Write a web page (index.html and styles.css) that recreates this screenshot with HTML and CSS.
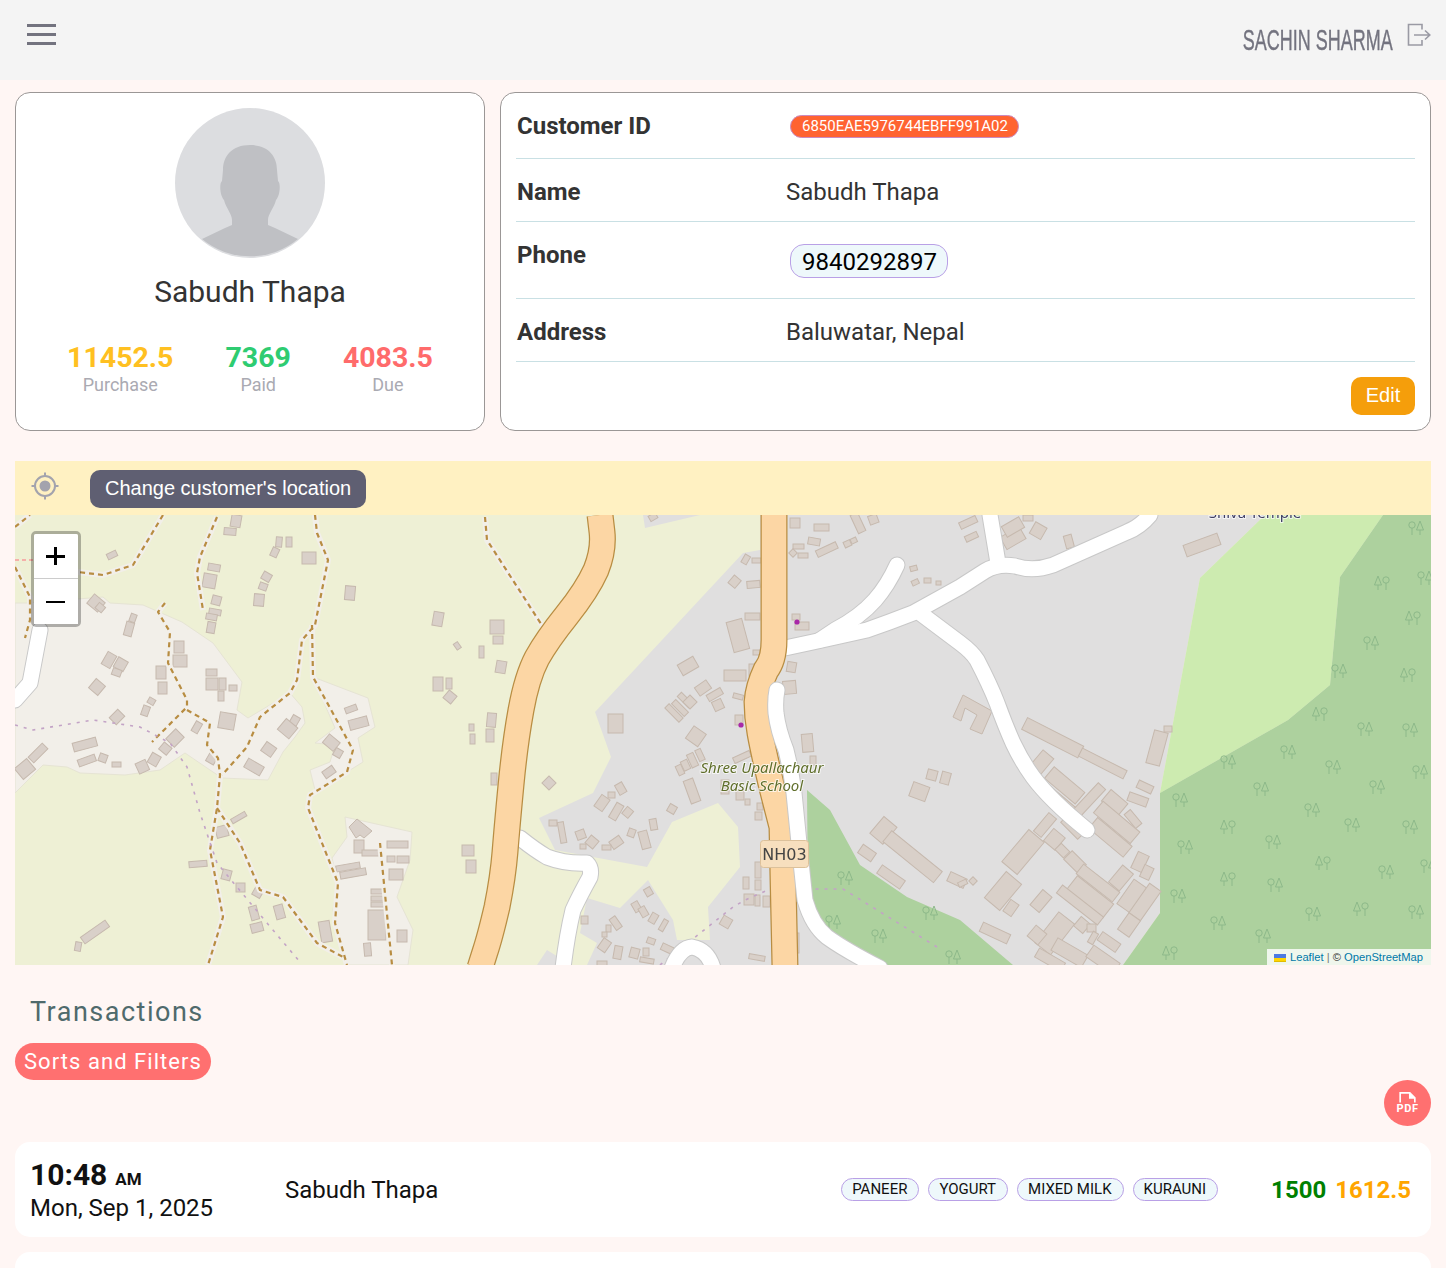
FILE: index.html
```html
<!DOCTYPE html>
<html lang="en">
<head>
    <meta charset="UTF-8">
    <meta name="viewport" content="width=device-width, initial-scale=1.0">
    <title>Customer - Sabudh Thapa</title>
    <link rel="stylesheet" href="styles.css">
</head>
<body>
    <header class="topbar">
        <button class="menu-btn" aria-label="Menu"><span></span><span></span><span></span></button>
        <div class="user">
            <span class="user-name">SACHIN SHARMA</span>
            <svg class="logout" viewBox="0 0 24 24" width="24" height="24" fill="none" stroke="#9a9aa4" stroke-width="1.6">
                <path d="M15 6.5V1.5H1.5V22H15V17"/>
                <path d="M7 12H22.5M18 7.5L22.8 12L18 16.5"/>
            </svg>
        </div>
    </header>

    <main class="page">
        <section class="top-cards">
            <div class="card profile">
                <svg class="avatar" viewBox="175 108 150 150" width="150" height="150">
                    <circle cx="250" cy="183" r="75" fill="#dcdde0"/>
                    <path fill="#bfc0c4" d="M250 145C268 145 277 156 277 170L278 181C281 183 280 196 276 200C274 208 268 214 268 220V225L275 228L298 239A75 75 0 0 1 202 239L225 228L232 225V220C232 214 226 208 224 200C220 196 219 183 222 181L223 170C223 156 232 145 250 145Z"/>
                </svg>
                <h2 class="profile-name">Sabudh Thapa</h2>
                <div class="stats">
                    <div class="stat"><b class="purchase">11452.5</b><span>Purchase</span></div>
                    <div class="stat"><b class="paid">7369</b><span>Paid</span></div>
                    <div class="stat"><b class="due">4083.5</b><span>Due</span></div>
                </div>
            </div>

            <div class="card details">
                <div class="row row-id">
                    <div class="label">Customer ID</div>
                    <div><span class="id-badge">6850EAE5976744EBFF991A02</span></div>
                </div>
                <div class="row row-name">
                    <div class="label">Name</div>
                    <div class="value">Sabudh Thapa</div>
                </div>
                <div class="row row-phone">
                    <div class="label">Phone</div>
                    <div><span class="phone-chip">9840292897</span></div>
                </div>
                <div class="row row-name">
                    <div class="label">Address</div>
                    <div class="value">Baluwatar, Nepal</div>
                </div>
                <div class="edit-wrap"><button class="edit-btn">Edit</button></div>
            </div>
        </section>

        <section class="location-bar">
            <svg class="target" viewBox="0 0 28 28" width="28" height="28" fill="none" stroke="#a3a3ad" stroke-width="2">
                <circle cx="14" cy="14" r="10"/>
                <circle cx="14" cy="14" r="5.5" fill="#a3a3ad" stroke="none"/>
                <path d="M14 0.5V4M14 24V27.5M0.5 14H4M24 14H27.5"/>
            </svg>
            <button class="location-btn">Change customer's location</button>
        </section>

        <section class="map">
            <svg class="map-svg" viewBox="15 515 1416 450" width="1416" height="450">
                <defs>
                    <g id="treeA">
                        <circle cx="-4" cy="-3" r="3.2"/><path d="M-4 0V7M4 -7L7.5 2H0.5ZM4 2V7"/>
                    </g>
                    <g id="treeB">
                        <path d="M-4 -7L-0.5 2H-7.5ZM-4 2V7M4 0V7"/><circle cx="4" cy="-3" r="3.2"/>
                    </g>
                </defs>

                <!-- land -->
                <rect class="farm" x="15" y="515" width="1416" height="450"/>
                <path class="village" d="M15 603L27 603L103 597L110 603L143 605L182 622L213 643L242 682L237 710L248 718L290 693L302 707L305 723L295 737L283 752L268 780L222 778L210 770L185 753L160 770L125 775L80 773L67 767L43 765L15 793Z"/>
                <path class="village" d="M345 817L412 832L410 860L397 897L413 930L408 965L347 965L333 910L338 883L332 858L347 837Z"/>
                <path class="village" d="M313 677L368 698L375 727L358 738L363 762L347 772L315 790L310 770L330 762L335 745L315 743L335 728Z"/>
                <path class="resid" d="M643 515L645 528L700 515ZM743 553L760 550L760 515L1265 515L1200 578L1160 793L1160 913L1123 965L587 965L597 943L580 933L587 898L620 908L648 880L673 920L677 940L710 940L708 907L740 867L738 827L718 803L672 822L647 867L555 850L539 818L593 793L611 757L595 712Z"/>
                <path class="resid" d="M537 965L547 950L560 958L556 965Z"/>
                <path class="meadow" d="M1265 515L1383 515L1340 577L1330 685L1288 720L1160 793L1200 578Z"/>
                <path class="forest" d="M1383 515L1431 515L1431 965L1123 965L1160 913L1160 793L1288 720L1330 685L1340 577Z"/>
                <path class="forest" d="M807 790L830 810L860 865L907 897L960 920L1013 965L880 965L827 937L808 900Z"/>

                <!-- trees -->
                <g class="trees">
                    <use href="#treeA" x="1416" y="528"/><use href="#treeB" x="1382" y="583"/><use href="#treeA" x="1425" y="578"/>
                    <use href="#treeB" x="1413" y="618"/><use href="#treeA" x="1371" y="643"/><use href="#treeB" x="1408" y="675"/>
                    <use href="#treeA" x="1339" y="671"/><use href="#treeB" x="1320" y="714"/><use href="#treeA" x="1365" y="729"/>
                    <use href="#treeA" x="1410" y="730"/><use href="#treeA" x="1288" y="752"/><use href="#treeA" x="1333" y="767"/>
                    <use href="#treeA" x="1228" y="762"/><use href="#treeA" x="1420" y="772"/><use href="#treeA" x="1377" y="787"/>
                    <use href="#treeA" x="1261" y="789"/><use href="#treeA" x="1180" y="800"/><use href="#treeA" x="1312" y="810"/>
                    <use href="#treeB" x="1228" y="827"/><use href="#treeA" x="1352" y="825"/><use href="#treeA" x="1410" y="827"/>
                    <use href="#treeA" x="1273" y="842"/><use href="#treeA" x="1185" y="847"/><use href="#treeB" x="1323" y="863"/>
                    <use href="#treeA" x="1386" y="872"/><use href="#treeB" x="1228" y="879"/><use href="#treeA" x="1428" y="866"/>
                    <use href="#treeA" x="1275" y="885"/><use href="#treeA" x="1178" y="896"/><use href="#treeA" x="1313" y="914"/>
                    <use href="#treeB" x="1361" y="909"/><use href="#treeA" x="1416" y="912"/><use href="#treeA" x="1218" y="923"/>
                    <use href="#treeA" x="1263" y="936"/><use href="#treeB" x="1170" y="953"/>
                    <use href="#treeA" x="845" y="878"/><use href="#treeA" x="833" y="922"/><use href="#treeA" x="879" y="936"/>
                    <use href="#treeA" x="930" y="913"/><use href="#treeA" x="953" y="957"/>
                </g>

                <!-- buildings -->
                <g class="bld">
                    <rect x="107" y="552" width="10" height="6" transform="rotate(-25 112 555)"/>
                    <rect x="231" y="515" width="10" height="12" transform="rotate(10 236 521)"/>
                    <rect x="224" y="528" width="12" height="7" transform="rotate(5 230 532)"/>
                    <rect x="276" y="537" width="6" height="10" transform="rotate(5 279 542)"/>
                    <rect x="286" y="537" width="6" height="10"/>
                    <rect x="271" y="548" width="7" height="9" transform="rotate(25 275 553)"/>
                    <rect x="302" y="552" width="14" height="12"/>
                    <rect x="208" y="564" width="12" height="7" transform="rotate(10 214 568)"/>
                    <rect x="203" y="574" width="13" height="14" transform="rotate(10 210 581)"/>
                    <rect x="262" y="573" width="9" height="8" transform="rotate(30 267 577)"/>
                    <rect x="259" y="583" width="8" height="7" transform="rotate(20 263 587)"/>
                    <rect x="254" y="594" width="10" height="12" transform="rotate(5 259 600)"/>
                    <rect x="212" y="596" width="9" height="9" transform="rotate(15 217 600)"/>
                    <rect x="209" y="609" width="12" height="6" transform="rotate(10 215 612)"/>
                    <rect x="206" y="614" width="11" height="6" transform="rotate(10 212 617)"/>
                    <rect x="207" y="622" width="8" height="11" transform="rotate(10 211 628)"/>
                    <rect x="345" y="586" width="10" height="14" transform="rotate(5 350 593)"/>
                    <rect x="433" y="612" width="10" height="14" transform="rotate(10 438 619)"/>
                    <rect x="455" y="642" width="5" height="7" transform="rotate(-35 458 646)"/>
                    <rect x="89" y="597" width="14" height="12" transform="rotate(40 96 603)"/>
                    <rect x="96" y="604" width="8" height="7" transform="rotate(40 100 608)"/>
                    <rect x="130" y="614" width="6" height="8" transform="rotate(20 133 618)"/>
                    <rect x="125" y="622" width="8" height="14" transform="rotate(15 129 629)"/>
                    <rect x="174" y="641" width="10" height="12"/>
                    <rect x="173" y="655" width="14" height="12"/>
                    <rect x="104" y="653" width="10" height="14" transform="rotate(30 109 660)"/>
                    <rect x="115" y="659" width="11" height="11" transform="rotate(30 121 665)"/>
                    <rect x="112" y="669" width="9" height="7" transform="rotate(20 117 673)"/>
                    <rect x="91" y="681" width="12" height="12" transform="rotate(40 97 687)"/>
                    <rect x="156" y="666" width="10" height="13"/>
                    <rect x="158" y="682" width="9" height="12"/>
                    <rect x="206" y="669" width="11" height="7"/>
                    <rect x="206" y="678" width="12" height="12"/>
                    <rect x="219" y="678" width="7" height="12"/>
                    <rect x="229" y="685" width="8" height="6"/>
                    <rect x="218" y="691" width="6" height="10"/>
                    <rect x="148" y="698" width="7" height="6" transform="rotate(30 151 701)"/>
                    <rect x="142" y="706" width="7" height="10" transform="rotate(20 146 711)"/>
                    <rect x="111" y="712" width="12" height="10" transform="rotate(-45 117 717)"/>
                    <rect x="219" y="713" width="16" height="16" transform="rotate(10 227 721)"/>
                    <rect x="193" y="722" width="7" height="11" transform="rotate(30 197 728)"/>
                    <rect x="291" y="716" width="8" height="9" transform="rotate(30 295 720)"/>
                    <rect x="280" y="722" width="15" height="14" transform="rotate(40 288 729)"/>
                    <rect x="73" y="740" width="24" height="9" transform="rotate(-15 85 745)"/>
                    <rect x="78" y="757" width="18" height="7" transform="rotate(-20 87 761)"/>
                    <rect x="99" y="754" width="8" height="8" transform="rotate(20 103 758)"/>
                    <rect x="112" y="762" width="9" height="5"/>
                    <rect x="28" y="749" width="20" height="8" transform="rotate(-45 38 753)"/>
                    <rect x="17" y="762" width="16" height="14" transform="rotate(-40 25 769)"/>
                    <rect x="168" y="732" width="14" height="12" transform="rotate(-45 175 738)"/>
                    <rect x="160" y="744" width="10" height="9" transform="rotate(40 165 749)"/>
                    <rect x="149" y="754" width="10" height="11" transform="rotate(30 154 760)"/>
                    <rect x="137" y="761" width="11" height="11" transform="rotate(-25 143 767)"/>
                    <rect x="207" y="754" width="9" height="9" transform="rotate(30 211 759)"/>
                    <rect x="263" y="744" width="12" height="11" transform="rotate(35 269 749)"/>
                    <rect x="245" y="762" width="18" height="10" transform="rotate(30 254 767)"/>
                    <rect x="345" y="706" width="12" height="6" transform="rotate(-20 351 709)"/>
                    <rect x="349" y="718" width="19" height="10" transform="rotate(-15 359 723)"/>
                    <rect x="324" y="737" width="14" height="11" transform="rotate(40 331 743)"/>
                    <rect x="334" y="749" width="8" height="8" transform="rotate(30 338 753)"/>
                    <rect x="323" y="768" width="12" height="8" transform="rotate(-35 329 772)"/>
                    <rect x="433" y="677" width="10" height="14"/>
                    <rect x="446" y="678" width="6" height="11"/>
                    <rect x="445" y="692" width="10" height="10" transform="rotate(40 450 697)"/>
                    <rect x="469" y="724" width="5" height="7"/>
                    <rect x="470" y="734" width="5" height="10"/>
                    <rect x="462" y="845" width="12" height="11"/>
                    <rect x="466" y="860" width="10" height="13"/>
                    <rect x="231" y="815" width="16" height="5" transform="rotate(-30 239 818)"/>
                    <rect x="216" y="826" width="12" height="11" transform="rotate(-15 222 832)"/>
                    <rect x="189" y="861" width="18" height="6" transform="rotate(-5 198 864)"/>
                    <rect x="222" y="870" width="9" height="10" transform="rotate(15 227 875)"/>
                    <rect x="236" y="883" width="9" height="9"/>
                    <rect x="253" y="888" width="9" height="9" transform="rotate(30 258 893)"/>
                    <rect x="250" y="906" width="8" height="14" transform="rotate(-15 254 913)"/>
                    <rect x="275" y="905" width="9" height="14" transform="rotate(-15 279 912)"/>
                    <rect x="251" y="923" width="12" height="9" transform="rotate(-15 257 928)"/>
                    <rect x="320" y="921" width="11" height="21" transform="rotate(-10 326 932)"/>
                    <rect x="80" y="928" width="30" height="8" transform="rotate(-35 95 932)"/>
                    <rect x="75" y="942" width="6" height="9" transform="rotate(10 78 947)"/>
                    <path d="M349 827L357 819L372 831L364 838L360 835L356 838Z"/>
                    <rect x="354" y="840" width="10" height="13"/>
                    <rect x="362" y="850" width="18" height="6"/>
                    <rect x="387" y="841" width="21" height="7"/>
                    <rect x="397" y="856" width="12" height="7"/>
                    <rect x="387" y="856" width="8" height="6"/>
                    <rect x="336" y="864" width="24" height="6" transform="rotate(-10 348 867)"/>
                    <rect x="340" y="870" width="26" height="7" transform="rotate(-10 353 873)"/>
                    <rect x="389" y="869" width="14" height="11"/>
                    <rect x="371" y="889" width="13" height="5"/>
                    <rect x="371" y="896" width="13" height="5"/>
                    <rect x="371" y="902" width="13" height="5"/>
                    <rect x="368" y="910" width="18" height="30"/>
                    <rect x="397" y="930" width="10" height="12"/>
                    <rect x="364" y="943" width="7" height="13" transform="rotate(-5 368 949)"/>

                    <rect x="490" y="620" width="14" height="14"/>
                    <rect x="493" y="636" width="10" height="8"/>
                    <rect x="479" y="646" width="5" height="12"/>
                    <rect x="496" y="661" width="10" height="12" transform="rotate(10 501 667)"/>
                    <rect x="487" y="713" width="9" height="14" transform="rotate(5 491 720)"/>
                    <rect x="486" y="729" width="8" height="13"/>
                    <rect x="491" y="773" width="6" height="12"/>
                    <rect x="544" y="778" width="10" height="10" transform="rotate(45 549 783)"/>
                    <rect x="649" y="514" width="8" height="6" transform="rotate(-30 653 517)"/>
                    <rect x="608" y="714" width="15" height="19"/>
                    <rect x="679" y="660" width="18" height="12" transform="rotate(-30 688 666)"/>
                    <rect x="696" y="683" width="14" height="10" transform="rotate(-35 703 688)"/>
                    <rect x="707" y="691" width="16" height="7" transform="rotate(-30 715 695)"/>
                    <rect x="713" y="700" width="10" height="10" transform="rotate(-25 718 705)"/>
                    <rect x="724" y="670" width="22" height="11"/>
                    <rect x="664" y="710" width="20" height="6" transform="rotate(45 674 713)"/>
                    <rect x="671" y="705" width="18" height="6" transform="rotate(45 680 708)"/>
                    <rect x="677" y="697" width="16" height="6" transform="rotate(45 685 700)"/>
                    <rect x="685" y="697" width="10" height="10" transform="rotate(45 690 702)"/>
                    <rect x="730" y="620" width="16" height="31" transform="rotate(-15 738 636)"/>
                    <rect x="745" y="613" width="15" height="7"/>
                    <rect x="730" y="577" width="9" height="10" transform="rotate(40 735 582)"/>
                    <rect x="747" y="581" width="13" height="7" transform="rotate(-5 753 585)"/>
                    <rect x="743" y="555" width="6" height="9" transform="rotate(30 746 559)"/>
                    <rect x="752" y="558" width="9" height="5"/>
                    <rect x="753" y="650" width="7" height="5"/>
                    <rect x="749" y="664" width="8" height="12"/>
                    <rect x="733" y="694" width="10" height="5" transform="rotate(15 738 697)"/>
                    <rect x="735" y="715" width="8" height="10"/>
                    <rect x="688" y="729" width="15" height="15" transform="rotate(35 696 737)"/>
                    <rect x="733" y="754" width="18" height="6" transform="rotate(-25 742 757)"/>
                    <rect x="697" y="749" width="6" height="12" transform="rotate(-25 700 755)"/>
                    <rect x="689" y="753" width="7" height="14" transform="rotate(-25 693 760)"/>
                    <rect x="682" y="760" width="7" height="10" transform="rotate(-25 686 765)"/>
                    <rect x="677" y="765" width="6" height="10" transform="rotate(-25 680 770)"/>
                    <rect x="687" y="779" width="10" height="24" transform="rotate(-20 692 791)"/>
                    <rect x="721" y="780" width="8" height="14"/>
                    <rect x="736" y="790" width="8" height="10"/>
                    <rect x="745" y="799" width="5" height="6"/>
                    <rect x="757" y="803" width="6" height="7"/>
                    <rect x="755" y="812" width="7" height="8"/>
                    <rect x="668" y="805" width="8" height="8" transform="rotate(30 672 809)"/>
                    <rect x="617" y="783" width="8" height="11" transform="rotate(-30 621 789)"/>
                    <rect x="608" y="792" width="7" height="6"/>
                    <rect x="597" y="796" width="10" height="14" transform="rotate(35 602 803)"/>
                    <rect x="612" y="803" width="8" height="17" transform="rotate(30 616 812)"/>
                    <rect x="623" y="808" width="9" height="8" transform="rotate(-50 628 812)"/>
                    <rect x="650" y="819" width="7" height="11" transform="rotate(-10 653 825)"/>
                    <rect x="628" y="829" width="7" height="8" transform="rotate(20 632 833)"/>
                    <rect x="640" y="831" width="9" height="18" transform="rotate(-15 644 840)"/>
                    <rect x="610" y="838" width="12" height="9" transform="rotate(-35 616 842)"/>
                    <rect x="602" y="845" width="9" height="5"/>
                    <rect x="587" y="837" width="10" height="10" transform="rotate(40 592 842)"/>
                    <rect x="576" y="830" width="9" height="9" transform="rotate(-20 581 834)"/>
                    <rect x="580" y="844" width="6" height="5"/>
                    <rect x="549" y="820" width="8" height="6"/>
                    <rect x="559" y="822" width="6" height="21" transform="rotate(-10 562 832)"/>
                    <rect x="743" y="877" width="6" height="12"/>
                    <rect x="755" y="880" width="6" height="10"/>
                    <rect x="755" y="862" width="6" height="16"/>
                    <rect x="763" y="896" width="7" height="11"/>
                    <rect x="744" y="894" width="10" height="11"/>
                    <rect x="755" y="895" width="5" height="11"/>
                    <rect x="721" y="917" width="10" height="10" transform="rotate(30 726 922)"/>
                    <rect x="645" y="888" width="7" height="8" transform="rotate(-30 648 892)"/>
                    <rect x="633" y="902" width="7" height="10" transform="rotate(-30 636 907)"/>
                    <rect x="640" y="907" width="7" height="10" transform="rotate(-30 643 912)"/>
                    <rect x="650" y="913" width="7" height="10" transform="rotate(30 653 918)"/>
                    <rect x="661" y="919" width="5" height="12" transform="rotate(30 663 925)"/>
                    <rect x="612" y="917" width="7" height="13" transform="rotate(-35 615 923)"/>
                    <rect x="606" y="925" width="5" height="7"/>
                    <rect x="602" y="932" width="5" height="5"/>
                    <rect x="600" y="939" width="9" height="12" transform="rotate(35 604 945)"/>
                    <rect x="614" y="946" width="8" height="13" transform="rotate(10 618 952)"/>
                    <rect x="630" y="948" width="9" height="10" transform="rotate(15 634 953)"/>
                    <rect x="643" y="948" width="6" height="8"/>
                    <rect x="647" y="938" width="8" height="6" transform="rotate(20 651 941)"/>
                    <rect x="640" y="958" width="14" height="5" transform="rotate(10 647 960)"/>
                    <rect x="661" y="945" width="12" height="7" transform="rotate(25 667 949)"/>
                    <rect x="581" y="916" width="7" height="8"/>
                    <rect x="597" y="961" width="10" height="5"/>
                    <rect x="749" y="955" width="16" height="5" transform="rotate(10 757 957)"/>
                    <rect x="795" y="933" width="4" height="20"/>
                    <rect x="790" y="518" width="10" height="10"/>
                    <rect x="814" y="524" width="15" height="7"/>
                    <rect x="793" y="544" width="11" height="5"/>
                    <rect x="808" y="538" width="12" height="7" transform="rotate(10 814 542)"/>
                    <rect x="816" y="546" width="22" height="7" transform="rotate(-25 827 550)"/>
                    <rect x="844" y="541" width="7" height="6" transform="rotate(-25 847 544)"/>
                    <rect x="851" y="538" width="6" height="5" transform="rotate(-25 854 541)"/>
                    <rect x="798" y="553" width="10" height="5"/>
                    <rect x="790" y="550" width="6" height="6" transform="rotate(45 793 553)"/>
                    <rect x="854" y="513" width="8" height="20" transform="rotate(-25 858 523)"/>
                    <rect x="869" y="515" width="9" height="9" transform="rotate(-20 873 520)"/>
                    <rect x="910" y="566" width="7" height="5" transform="rotate(-15 913 568)"/>
                    <rect x="912" y="580" width="7" height="5" transform="rotate(-25 915 583)"/>
                    <rect x="924" y="578" width="7" height="5"/>
                    <rect x="936" y="581" width="5" height="4"/>
                    <rect x="792" y="614" width="8" height="6"/>
                    <rect x="795" y="622" width="14" height="8"/>
                    <rect x="787" y="662" width="9" height="10" transform="rotate(10 791 667)"/>
                    <rect x="783" y="681" width="13" height="13" transform="rotate(-5 789 687)"/>
                    <rect x="802" y="734" width="11" height="18" transform="rotate(-5 807 743)"/>
                    <rect x="810" y="756" width="6" height="9"/>
                    <rect x="927" y="770" width="10" height="10" transform="rotate(15 932 775)"/>
                    <rect x="941" y="772" width="9" height="12" transform="rotate(15 945 778)"/>
                    <rect x="911" y="784" width="17" height="15" transform="rotate(20 919 791)"/>
                    <rect x="875" y="819" width="17" height="22" transform="rotate(40 883 830)"/>
                    <rect x="880" y="850" width="65" height="14" transform="rotate(39 913 857)"/>
                    <rect x="859" y="848" width="16" height="10" transform="rotate(35 867 853)"/>
                    <rect x="877" y="872" width="28" height="10" transform="rotate(35 891 877)"/>
                    <rect x="948" y="875" width="18" height="10" transform="rotate(25 957 880)"/>

                    <rect x="1002" y="531" width="22" height="14" transform="rotate(-30 1013 538)"/>
                    <rect x="1003" y="521" width="20" height="12" transform="rotate(-30 1013 527)"/>
                    <rect x="1032" y="524" width="13" height="13" transform="rotate(30 1038 530)"/>
                    <rect x="959" y="519" width="18" height="7" transform="rotate(-25 968 522)"/>
                    <rect x="965" y="534" width="13" height="6" transform="rotate(-25 971 537)"/>
                    <rect x="1023" y="515" width="10" height="6"/>
                    <rect x="1065" y="535" width="8" height="13" transform="rotate(-15 1069 542)"/>
                    <rect x="1184" y="539" width="36" height="12" transform="rotate(-20 1202 545)"/>
                    <path d="M953 717L963 695L992 711L982 734L970 729L977 715L965 708L961 721Z"/>
                    <rect x="1021" y="731" width="63" height="13" transform="rotate(27 1052 738)"/>
                    <rect x="1078" y="759" width="50" height="9" transform="rotate(27 1103 763)"/>
                    <rect x="1032" y="755" width="20" height="14" transform="rotate(-50 1042 762)"/>
                    <rect x="1045" y="778" width="40" height="15" transform="rotate(40 1065 785)"/>
                    <rect x="1041" y="795" width="38" height="5" transform="rotate(40 1060 797)"/>
                    <rect x="1071" y="795" width="37" height="10" transform="rotate(-47 1089 800)"/>
                    <rect x="1104" y="795" width="22" height="15" transform="rotate(40 1115 802)"/>
                    <rect x="1093" y="815" width="48" height="15" transform="rotate(40 1117 822)"/>
                    <rect x="1088" y="830" width="45" height="14" transform="rotate(40 1110 837)"/>
                    <rect x="1124" y="815" width="18" height="8" transform="rotate(50 1133 819)"/>
                    <rect x="1060" y="824" width="24" height="8" transform="rotate(45 1072 828)"/>
                    <rect x="1033" y="820" width="24" height="10" transform="rotate(-50 1045 825)"/>
                    <rect x="1002" y="842" width="42" height="20" transform="rotate(-50 1023 852)"/>
                    <rect x="1046" y="832" width="16" height="15" transform="rotate(-50 1054 839)"/>
                    <rect x="1056" y="846" width="12" height="9" transform="rotate(45 1062 851)"/>
                    <rect x="1065" y="856" width="20" height="12" transform="rotate(45 1075 862)"/>
                    <rect x="1075" y="877" width="46" height="12" transform="rotate(38 1098 883)"/>
                    <rect x="1110" y="871" width="22" height="14" transform="rotate(-50 1121 878)"/>
                    <rect x="1067" y="888" width="46" height="18" transform="rotate(38 1090 897)"/>
                    <rect x="1054" y="900" width="52" height="10" transform="rotate(38 1080 905)"/>
                    <rect x="986" y="881" width="34" height="20" transform="rotate(-50 1003 891)"/>
                    <rect x="1004" y="903" width="14" height="10" transform="rotate(-55 1011 908)"/>
                    <rect x="1031" y="895" width="20" height="12" transform="rotate(-50 1041 901)"/>
                    <rect x="1117" y="888" width="30" height="16" transform="rotate(-55 1132 896)"/>
                    <rect x="1127" y="895" width="36" height="14" transform="rotate(-55 1145 902)"/>
                    <rect x="1119" y="918" width="20" height="14" transform="rotate(-55 1129 925)"/>
                    <rect x="1131" y="856" width="18" height="12" transform="rotate(-65 1140 862)"/>
                    <rect x="1140" y="867" width="13" height="10" transform="rotate(-65 1147 872)"/>
                    <rect x="1137" y="783" width="16" height="8" transform="rotate(25 1145 787)"/>
                    <rect x="1128" y="795" width="20" height="9" transform="rotate(20 1138 799)"/>
                    <rect x="1140" y="741" width="34" height="14" transform="rotate(-75 1157 748)"/>
                    <rect x="1164" y="726" width="8" height="6"/>
                    <rect x="970" y="878" width="6" height="6" transform="rotate(45 973 881)"/>
                    <rect x="958" y="881" width="9" height="5" transform="rotate(-25 962 883)"/>
                    <rect x="980" y="928" width="30" height="10" transform="rotate(25 995 933)"/>
                    <rect x="1035" y="923" width="39" height="20" transform="rotate(-52 1055 933)"/>
                    <rect x="1030" y="928" width="14" height="14" transform="rotate(40 1037 935)"/>
                    <rect x="1052" y="946" width="35" height="14" transform="rotate(30 1070 953)"/>
                    <rect x="1087" y="953" width="32" height="14" transform="rotate(35 1103 960)"/>
                    <rect x="1076" y="919" width="12" height="12" transform="rotate(40 1082 925)"/>
                    <rect x="1087" y="924" width="9" height="8"/>
                    <rect x="1090" y="932" width="6" height="12" transform="rotate(30 1093 938)"/>
                    <rect x="1098" y="937" width="22" height="10" transform="rotate(35 1109 942)"/>
                    <rect x="1035" y="955" width="30" height="10" transform="rotate(30 1050 960)"/>
                </g>

                <!-- footpaths -->
                <g class="path-casing">
                    <path id="p1" d="M217 517L200 557L197 573L203 610"/>
                    <path id="p2" d="M315 515L317 533L328 560L315 625L302 640L297 680L290 693L260 717L247 747L222 775"/>
                    <path id="p3" d="M312 625L313 677L335 717L353 750L347 772L310 795L308 808L338 883L335 923L347 965"/>
                    <path id="p4" d="M163 515L133 565L103 575L78 572"/>
                    <path id="p5" d="M15 567L30 597L30 620L25 638"/>
                    <path id="p6" d="M165 603L158 612L170 632L168 663L187 700L187 707L152 742"/>
                    <path id="p7" d="M187 710L210 723L207 745L218 758L220 775L217 808L210 850L223 917L208 965"/>
                    <path id="p8" d="M217 808L240 843L260 890L283 897L317 943L343 957"/>
                    <path id="p9" d="M380 843L392 965"/>
                    <path id="p10" d="M485 517L487 540L543 627"/>
                    <path id="p11" d="M15 527L30 515"/>
                </g>
                <g class="path-dash">
                    <use href="#p1"/><use href="#p2"/><use href="#p3"/><use href="#p4"/><use href="#p5"/><use href="#p6"/>
                    <use href="#p7"/><use href="#p8"/><use href="#p9"/><use href="#p10"/><use href="#p11"/>
                </g>
                <path class="dots" d="M15 725L33 730L93 720L140 727L170 743L187 767L200 813L217 863L267 923L300 962"/>
                <path class="dots" d="M660 965L733 907L745 900L770 889L843 889L937 947"/>
                <path class="red-dots" d="M15 560H33"/>

                <!-- roads -->
                <g class="road-casing">
                    <path id="r1" d="M15 700L30 683L40 630"/>
                    <path id="r2" d="M785 648L813 642L867 630Q890 622 913 613L960 587L985 571Q998 563 1015 566Q1033 572 1053 565L1127 532Q1140 527 1150 515"/>
                    <path id="r3" d="M998 563L990 515"/>
                    <path id="r4" d="M897 565Q888 585 875 600Q860 617 835 630L820 640"/>
                    <path id="r5" d="M920 613L960 643Q972 652 977 660Q990 685 997 703Q1005 725 1013 743Q1022 762 1033 777Q1050 800 1087 830"/>
                    <path id="r6" d="M520 838Q535 850 547 857Q565 864 587 863Q592 868 590 877Q580 895 573 910Q567 935 563 968"/>
                    <path id="r7" d="M672 968Q680 948 692 947Q708 950 713 968"/>
                </g>
                <g class="road">
                    <use href="#r1"/><use href="#r2"/><use href="#r3"/><use href="#r4"/><use href="#r5"/><use href="#r6"/><use href="#r7"/>
                </g>
                <g class="trunk-casing">
                    <path id="t1" d="M600 515L602 532Q604 550 596 570Q587 590 567 615Q547 640 537 658Q527 677 521 710Q515 743 511 785Q507 827 505 852Q503 877 497 907Q490 937 485 952L480 968"/>
                    <path id="t2" d="M774 515L774 640Q774 660 766 670Q758 687 757 702Q757 717 760 733Q763 750 772 788L782 827L783 877L785 968"/>
                </g>
                <g class="trunk">
                    <use href="#t1"/><use href="#t2"/>
                </g>
                <g class="road-casing">
                    <path id="r8" d="M777 690Q775 700 776 713Q778 730 786 750Q791 770 794 793L799 843L805 900Q812 925 827 937Q845 950 880 968"/>
                </g>
                <g class="road">
                    <use href="#r8"/>
                </g>

                <!-- labels -->
                <circle class="poi" cx="797" cy="622" r="2.6"/>
                <circle class="poi" cx="741" cy="725" r="2.6"/>
                <text class="map-label" x="762" y="773">Shree Upallachaur</text>
                <text class="map-label" x="762" y="791">Basic School</text>
                <text class="map-temple" x="1255" y="518">Shiva Temple</text>
                <rect class="shield" x="760.5" y="840.5" width="48" height="27" rx="3"/>
                <text class="shield-text" x="784.5" y="860">NH03</text>
            </svg>

            <div class="zoom-ctl">
                <button class="zoom-btn zoom-in" aria-label="Zoom in"><span class="zoom-h"></span><span class="zoom-v"></span></button>
                <button class="zoom-btn" aria-label="Zoom out"><span class="zoom-h"></span></button>
            </div>
            <div class="attribution">
                <svg class="flag" viewBox="0 0 12 8" width="12" height="8"><path fill="#4c7be1" d="M0 0h12v4H0z"/><path fill="#ffd500" d="M0 4h12v3H0z"/><path fill="#e0bc00" d="M0 7h12v1H0z"/></svg>
                <a>Leaflet</a> <span class="sep">|</span> © <a>OpenStreetMap</a>
            </div>
        </section>

        <section class="transactions">
            <h3 class="section-title">Transactions</h3>
            <button class="filter-btn">Sorts and Filters</button>
            <div class="pdf-row">
                <button class="pdf-btn" aria-label="Export PDF">
                    <svg viewBox="0 0 20 12" width="19" height="11" fill="none" stroke="#fff" stroke-width="1.8">
                        <path d="M2 11.5V1H12.5L18 6.5V11.5"/><path d="M12.5 1V6.5H18" fill="#fff"/>
                    </svg>
                    <span>PDF</span>
                </button>
            </div>

            <article class="txn">
                <div class="txn-time">
                    <div class="clock-row"><b class="clock">10:48</b> <b class="ampm">AM</b></div>
                    <div class="txn-date">Mon, Sep 1, 2025</div>
                </div>
                <div class="txn-name">Sabudh Thapa</div>
                <div class="txn-items">
                    <span class="item">PANEER</span>
                    <span class="item">YOGURT</span>
                    <span class="item">MIXED MILK</span>
                    <span class="item">KURAUNI</span>
                </div>
                <div class="txn-amounts">
                    <b class="amt-paid">1500</b>
                    <b class="amt-total">1612.5</b>
                </div>
            </article>
            <article class="txn"></article>
        </section>
    </main>
</body>
</html>
```

FILE: styles.css
```css
* {
    margin: 0;
    padding: 0;
    box-sizing: border-box;
}

html, body {
    height: 100%;
    overflow: hidden;
}

body {
    background: #fff6f4;
    font-family: Roboto, "Liberation Sans", sans-serif;
    color: #333;
}

button {
    border: none;
    cursor: pointer;
}

/* top bar */
.topbar {
    height: 80px;
    background: #f4f4f4;
    display: flex;
    justify-content: space-between;
    padding: 24px 15px 0 27px;
}

.menu-btn {
    width: 29px;
    height: 21px;
    background: none;
    display: flex;
    flex-direction: column;
    justify-content: space-between;
}

.menu-btn span {
    display: block;
    height: 3px;
    background: #73737f;
}

.user {
    display: flex;
    align-items: flex-start;
    gap: 14px;
}

.user-name {
    display: inline-block;
    font-family: "Liberation Sans Narrow", "Liberation Sans", sans-serif;
    font-size: 29px;
    line-height: 32px;
    color: #73737f;
    -webkit-text-stroke: 0.4px #73737f;
    transform: scaleX(0.62);
    transform-origin: right center;
}

.logout {
    margin-top: -1px;
}

/* cards */
.page {
    height: calc(100vh - 80px);
    overflow: hidden;
    padding: 12px 15px 0;
}

.top-cards {
    display: grid;
    grid-template-columns: 470px 931px;
    gap: 15px;
}

.card {
    height: 339px;
    background: #fff;
    border: 1px solid #9b9796;
    border-radius: 15px;
}

.profile {
    display: flex;
    flex-direction: column;
    align-items: center;
    padding-top: 15px;
}

.avatar {
    display: block;
}

.profile-name {
    font-size: 30px;
    font-weight: 400;
    line-height: 36px;
    margin-top: 16px;
    color: #333;
}

.stats {
    display: flex;
    gap: 52px;
    margin-top: 31px;
}

.stat {
    display: flex;
    flex-direction: column;
    align-items: center;
}

.stat b {
    font-size: 28.5px;
    line-height: 33px;
    font-weight: 700;
}

.stat span {
    font-size: 18px;
    line-height: 21px;
    color: #aaaab2;
}

.purchase { color: #ffc021; }
.paid { color: #2ecc71; }
.due { color: #ff6b6b; }

.details {
    padding: 0 15px;
}

.row {
    display: grid;
    grid-template-columns: 270px 1fr;
    border-bottom: 1px solid #c9e0e4;
    font-size: 24px;
}

.row-id {
    height: 66px;
    padding-top: 19px;
}

.row-name {
    height: 63px;
    padding-top: 19px;
}

.row-phone {
    height: 77px;
    padding-top: 19px;
}

.label {
    font-weight: 700;
    line-height: 28px;
    padding-left: 1px;
}

.value {
    line-height: 28px;
}

.id-badge {
    display: inline-block;
    vertical-align: top;
    margin-left: 4px;
    margin-top: 3px;
    height: 23px;
    line-height: 21px;
    padding: 0 10px 0 11px;
    font-size: 15px;
    color: #fff;
    background: #ff6331;
    border: 1px solid #c98ac0;
    border-radius: 12px;
}

.phone-chip {
    display: inline-block;
    margin-left: 4px;
    margin-top: 3px;
    height: 34px;
    line-height: 34px;
    padding: 0 10px 0 11px;
    color: #000;
    background: #eef8fb;
    border: 1px solid #b9a0e6;
    border-radius: 14px;
}

.edit-wrap {
    display: flex;
    justify-content: flex-end;
    padding-top: 15px;
}

.edit-btn {
    width: 64px;
    height: 38px;
    padding-bottom: 2px;
    background: #f59e0b;
    color: #fff;
    font-family: "Liberation Sans", sans-serif;
    font-size: 20px;
    border-radius: 10px;
}

/* location bar */
.location-bar {
    margin-top: 30px;
    height: 54px;
    background: #fff1c2;
    display: flex;
    align-items: center;
    padding-left: 16px;
    gap: 31px;
}

.target {
    margin-top: -5px;
}

.location-btn {
    height: 38px;
    margin-top: 1px;
    padding: 0 15px;
    background: #5f5f72;
    color: #fff;
    font-family: "Liberation Sans", sans-serif;
    font-size: 20px;
    border-radius: 10px;
}

/* map */
.map {
    position: relative;
    height: 450px;
    overflow: hidden;
}

.map-svg {
    display: block;
    filter: blur(0.4px);
}

.farm { fill: #eef0d5; }
.village { fill: #f2efe9; stroke: #e6e4d4; stroke-width: 1; }
.resid { fill: #e0dfdf; }
.meadow { fill: #cdebb0; }
.forest { fill: #add19e; }

.trees {
    fill: none;
    stroke: #8db98a;
    stroke-width: 1;
}

.bld {
    fill: #d9d0c9;
    stroke: #c6b9ae;
    stroke-width: 1;
}

.path-casing {
    fill: none;
    stroke: #f2efe9;
    stroke-width: 6;
    stroke-linejoin: round;
}

.path-dash {
    fill: none;
    stroke: #b88d42;
    stroke-width: 2.2;
    stroke-dasharray: 5 4;
    stroke-linejoin: round;
}

.dots {
    fill: none;
    stroke: #c3a3c6;
    stroke-width: 1.6;
    stroke-dasharray: 3 6;
}

.red-dots {
    fill: none;
    stroke: #f79a9a;
    stroke-width: 1.4;
    stroke-dasharray: 4 3;
}

.road-casing {
    fill: none;
    stroke: #c8c8c8;
    stroke-width: 17;
    stroke-linecap: round;
    stroke-linejoin: round;
}

.road {
    fill: none;
    stroke: #fff;
    stroke-width: 15;
    stroke-linecap: round;
    stroke-linejoin: round;
}

.trunk-casing {
    fill: none;
    stroke: #b88d42;
    stroke-width: 27;
    stroke-linejoin: round;
}

.trunk {
    fill: none;
    stroke: #fcd6a4;
    stroke-width: 24.5;
    stroke-linejoin: round;
}

.poi { fill: #a828a8; }

.map-label {
    font-family: "Noto Sans", "Open Sans", sans-serif;
    font-style: italic;
    font-size: 15px;
    text-anchor: middle;
    fill: #5f6e2a;
    stroke: rgba(255, 255, 255, 0.7);
    stroke-width: 2;
    paint-order: stroke;
}

.map-temple {
    font-family: "Noto Sans", "Open Sans", sans-serif;
    font-size: 15px;
    text-anchor: middle;
    fill: #3f3f63;
    stroke: rgba(255, 255, 255, 0.7);
    stroke-width: 2;
    paint-order: stroke;
}

.shield {
    fill: #f7dfbe;
    stroke: #dcc19b;
}

.shield-text {
    font-family: "DejaVu Sans", sans-serif;
    font-size: 16px;
    text-anchor: middle;
    fill: #444;
}

.zoom-ctl {
    position: absolute;
    top: 16px;
    left: 16px;
    width: 50px;
    border: 3px solid rgba(0, 0, 0, 0.28);
    border-radius: 5px;
}

.zoom-btn {
    position: relative;
    display: block;
    width: 44px;
    height: 45px;
    background: #fff;
}

.zoom-in {
    border-bottom: 1px solid #ccc;
    border-radius: 2px 2px 0 0;
}

.zoom-h, .zoom-v {
    position: absolute;
    background: #000;
}

.zoom-h {
    left: 12px;
    top: 22px;
    width: 19px;
    height: 2px;
}

.zoom-in .zoom-h {
    top: 21px;
    height: 3px;
}

.zoom-v {
    left: 20px;
    top: 13px;
    width: 3px;
    height: 18px;
}

.attribution {
    position: absolute;
    right: 0;
    bottom: 0;
    height: 16px;
    line-height: 16px;
    padding: 0 8px 0 7px;
    background: rgba(255, 255, 255, 0.8);
    font-family: "Liberation Sans", sans-serif;
    font-size: 11.2px;
    color: #333;
    white-space: nowrap;
}

.attribution a { color: #0078a8; }
.attribution .sep { color: #777; }
.flag { margin-right: 1px; vertical-align: -1px; }

/* transactions */
.transactions {
    padding-top: 31px;
}

.section-title {
    font-size: 27px;
    font-weight: 400;
    line-height: 32px;
    letter-spacing: 1.5px;
    color: #4f6a6c;
    padding-left: 15px;
}

.filter-btn {
    display: block;
    margin-top: 15px;
    width: 196px;
    height: 37px;
    background: #ff7070;
    color: #fff;
    font-family: Roboto, sans-serif;
    font-size: 22px;
    letter-spacing: 1.05px;
    border-radius: 19px;
}

.pdf-row {
    display: flex;
    justify-content: flex-end;
}

.pdf-btn {
    width: 47px;
    height: 46px;
    border-radius: 50%;
    background: #ff7070;
    display: flex;
    flex-direction: column;
    align-items: center;
    justify-content: center;
    color: #fff;
    font-family: Roboto, sans-serif;
}

.pdf-btn span {
    font-size: 11px;
    font-weight: 700;
    letter-spacing: 0.6px;
    line-height: 11px;
}

.txn {
    height: 95px;
    margin-top: 16px;
    background: #fff;
    border-radius: 15px;
    display: flex;
    align-items: center;
    padding: 0 20px 0 15px;
    color: #111;
    flex-shrink: 0;
}

.txn + .txn {
    margin-top: 15px;
}

.txn-time {
    width: 255px;
    font-size: 24px;
    line-height: 30px;
}

.clock-row {
    padding-top: 1px;
    margin-bottom: -1px;
}

.clock {
    font-size: 30px;
    line-height: 36px;
}

.ampm {
    font-size: 17px;
    margin-left: 2px;
}

.txn-name {
    flex: 1;
    font-size: 24px;
}

.txn-items {
    display: flex;
    gap: 9px;
    margin-right: -1px;
}

.item {
    height: 23px;
    line-height: 21px;
    padding: 0 11px 0 10px;
    font-size: 15px;
    color: #111;
    background: #eef8fb;
    border: 1px solid #b9a0e6;
    border-radius: 12px;
}

.txn-amounts {
    display: flex;
    gap: 9px;
    margin-left: 54px;
    font-size: 24px;
}

.amt-paid { color: #008000; }
.amt-total { color: #ffa500; }
```
